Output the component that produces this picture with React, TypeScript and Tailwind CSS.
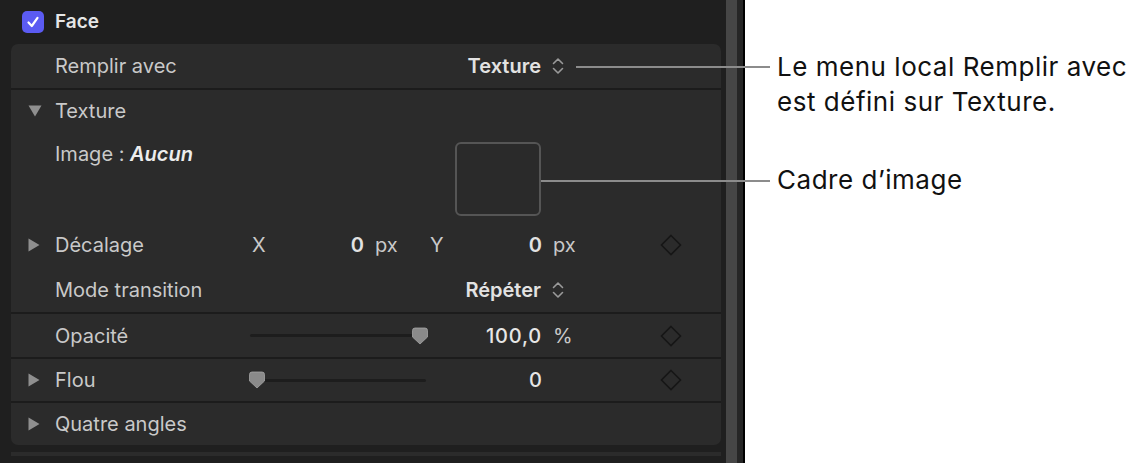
import React from 'react';

const font = { fontFamily: 'Inter, "Liberation Sans", sans-serif' };

function TriRight() {
  return (
    <svg width="12" height="14" viewBox="0 0 12 14" className="shrink-0">
      <path d="M0.5 0.5 L11.5 7 L0.5 13.5 Z" fill="#8f8f8f" />
    </svg>
  );
}

function TriDown() {
  return (
    <svg width="14" height="12" viewBox="0 0 14 12" className="shrink-0">
      <path d="M0.5 0.5 L13.5 0.5 L7 11.5 Z" fill="#8f8f8f" />
    </svg>
  );
}

function UpDown() {
  return (
    <svg width="12" height="22" viewBox="0 0 12 22" className="ml-[11px] shrink-0">
      <path d="M1.5 8.5 L6 4 L10.5 8.5" fill="none" stroke="#9a9a9a" strokeWidth="1.6" strokeLinecap="round" strokeLinejoin="round" />
      <path d="M1.5 13.5 L6 18 L10.5 13.5" fill="none" stroke="#9a9a9a" strokeWidth="1.6" strokeLinecap="round" strokeLinejoin="round" />
    </svg>
  );
}

function Keyframe() {
  return (
    <div className="ml-auto mr-[38px] w-[24px] flex justify-center">
      <svg width="22" height="22" viewBox="0 0 22 22">
        <path d="M11 1.5 L20.5 11 L11 20.5 L1.5 11 Z" fill="none" stroke="#161616" strokeWidth="1.6" />
      </svg>
    </div>
  );
}

function Thumb() {
  return (
    <svg width="18" height="18" viewBox="0 0 18 18">
      <path d="M1.5 3.5 Q1.5 1 4 1 H14 Q16.5 1 16.5 3.5 V10 L9 17 L1.5 10 Z" fill="#8a8a8a" stroke="#a4a4a4" strokeWidth="0.8" />
    </svg>
  );
}

function Slider({ pos }: { pos: number }) {
  return (
    <div className="relative w-[176px] h-[20px] flex items-center">
      <div className="w-full h-[3px] rounded-full bg-[#1d1d1d]" />
      <div className="absolute top-[1px]" style={{ left: pos }}>
        <Thumb />
      </div>
    </div>
  );
}

export default function App() {
  return (
    <div className="relative w-[1141px] h-[463px] flex bg-white overflow-hidden text-[20px] leading-[24px]" style={font}>
      {/* inspector panel */}
      <div className="w-[745px] h-full flex bg-[#1f1f1f]">
        <div className="w-[726px] pl-[11px] pr-[5px] flex flex-col">
          <div className="h-[44px] flex items-center pl-[11px]">
            <div className="w-[22px] h-[22px] rounded-[5px] bg-[#5b5bf2] flex items-center justify-center">
              <svg width="14" height="14" viewBox="0 0 14 14">
                <path d="M2.5 7.5 L5.8 11 L11.5 2.8" fill="none" stroke="#ffffff" strokeWidth="2.2" strokeLinecap="round" strokeLinejoin="round" />
              </svg>
            </div>
            <span className="ml-[11px] text-[19px] font-semibold text-[#e6e6e6]">Face</span>
          </div>

          <div className="rounded-[7px] bg-[#2b2b2b] overflow-hidden text-[#c9c9c9]">
            <div className="h-[46px] flex items-center pl-[44px] border-b-2 border-[#1c1c1c]">
              <span className="w-[370px]">Remplir avec</span>
              <div className="w-[116px] flex justify-end items-center">
                <span className="font-semibold text-[#e2e2e2]">Texture</span>
              </div>
              <UpDown />
            </div>

            <div className="border-b-2 border-[#1c1c1c]">
              <div className="h-[42px] flex items-center pl-[17px]">
                <TriDown />
                <span className="ml-[13px]">Texture</span>
              </div>
              <div className="h-[90px] flex items-start pl-[44px]">
                <div className="w-[400px] pt-[10px]">
                  Image : <span className="font-semibold italic text-[#ededed]">Aucun</span>
                </div>
                <div className="mt-[10px] w-[86px] h-[74px] rounded-[6px] border-2 border-[#555555] bg-[#2a2a2a]" />
              </div>
              <div className="h-[45px] flex items-center pl-[17px]">
                <TriRight />
                <span className="ml-[15px] w-[197px]">Décalage</span>
                <span className="w-[14px]">X</span>
                <span className="w-[98px] text-right font-semibold text-[#e2e2e2]">0</span>
                <span className="w-[66px] pl-[11px]">px</span>
                <span className="w-[14px]">Y</span>
                <span className="w-[98px] text-right font-semibold text-[#e2e2e2]">0</span>
                <span className="pl-[11px]">px</span>
                <Keyframe />
              </div>
              <div className="h-[45px] flex items-center pl-[44px]">
                <span className="w-[370px]">Mode transition</span>
                <div className="w-[116px] flex justify-end items-center">
                  <span className="font-semibold text-[#e2e2e2]">Répéter</span>
                </div>
                <UpDown />
              </div>
            </div>

            <div className="h-[45px] flex items-center pl-[44px] border-b-2 border-[#1c1c1c]">
              <span className="w-[195px]">Opacité</span>
              <Slider pos={161} />
              <span className="w-[116px] text-right font-medium tracking-[0.04em] text-[#e6e6e6]">100,0</span>
              <span className="pl-[11px]">%</span>
              <Keyframe />
            </div>

            <div className="h-[44px] flex items-center pl-[17px] border-b-2 border-[#1c1c1c]">
              <TriRight />
              <span className="ml-[15px] w-[195px]">Flou</span>
              <Slider pos={-2} />
              <span className="w-[116px] text-right font-medium text-[#e6e6e6]">0</span>
              <Keyframe />
            </div>

            <div className="h-[42px] flex items-center pl-[17px]">
              <TriRight />
              <span className="ml-[15px]">Quatre angles</span>
            </div>
          </div>

          <div className="mt-[7px] h-[4px] bg-[#2b2b2b]" />
        </div>
        <div className="w-[11px] bg-[#464646]" />
        <div className="w-[6px] bg-[#262626]" />
        <div className="w-[2px] bg-black" />
      </div>

      {/* annotations */}
      <div className="flex-1 pl-[32px] text-[26px] leading-[35px] tracking-[0.02em] text-[#111111]">
        <div className="pt-[49px]">
          Le menu local Remplir avec
          <br />
          est défini sur Texture.
        </div>
        <div className="mt-[43px]">Cadre d’image</div>
      </div>

      {/* callout lines */}
      <div className="absolute left-[576px] top-[66px] w-[194px] h-[2px] bg-[#8c8c8c]" />
      <div className="absolute left-[541px] top-[180px] w-[229px] h-[2px] bg-[#8c8c8c]" />
    </div>
  );
}
